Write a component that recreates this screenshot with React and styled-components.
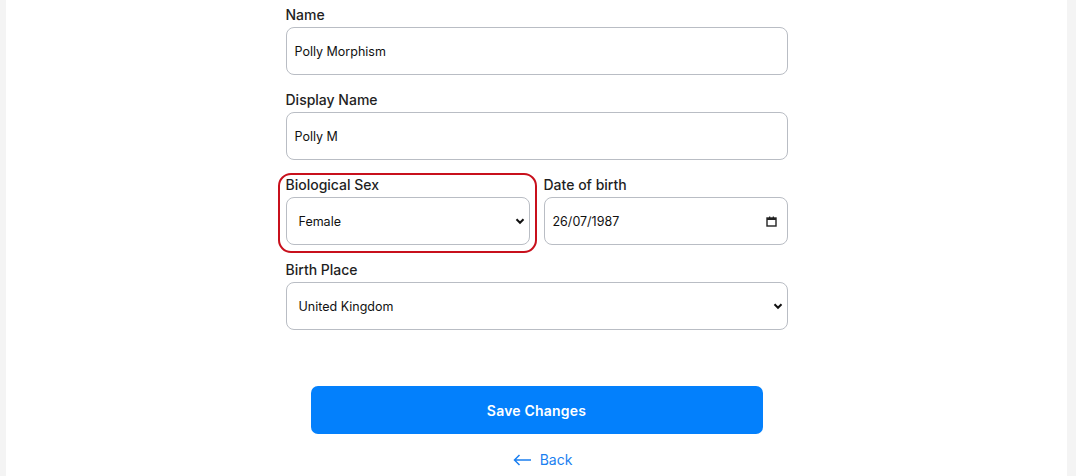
import React from "react";
import styled, { createGlobalStyle } from "styled-components";

const GlobalStyle = createGlobalStyle`
  html, body {
    margin: 0;
    padding: 0;
    background: #f4f4f4;
    font-family: Inter, "Open Sans", sans-serif;
  }
`;

export const Panel = styled.div`
  margin: 0 9px 0 6px;
  min-height: 476px;
  background: #ffffff;
  display: flex;
  justify-content: center;
`;

export const Form = styled.form`
  width: 502px;
  padding-top: 4px;
  display: flex;
  flex-direction: column;
  gap: 14px;
`;

export const Row = styled.div`
  display: grid;
  grid-template-columns: 1fr 1fr;
  gap: 14px;
`;

export const Field = styled.div`
  position: relative;
  display: flex;
  flex-direction: column;

  ${(p) =>
    p.highlighted &&
    `
    &::after {
      content: "";
      position: absolute;
      left: -8px;
      right: -7px;
      top: -1px;
      bottom: -8px;
      border: 2px solid #c8101c;
      border-radius: 13px;
      pointer-events: none;
    }
  `}
`;

export const Label = styled.label`
  font-size: 14px;
  font-weight: 500;
  line-height: 21px;
  color: #1f1f1f;
  margin-bottom: 2px;
`;

export const Box = styled.div`
  box-sizing: border-box;
  height: 48px;
  border: 1px solid #b9bdc4;
  border-radius: 8px;
  background: #fff;
  display: flex;
  align-items: center;
  justify-content: space-between;
  font-size: 12.5px;
  color: #111;
  padding-left: ${(p) => (p.select ? "12px" : "8px")};
  padding-right: ${(p) => (p.select ? "4px" : "10px")};
`;

export const Actions = styled.div`
  margin-top: 42px;
  display: flex;
  flex-direction: column;
  align-items: center;
  gap: 16px;
`;

export const SaveButton = styled.button`
  width: 452px;
  height: 48px;
  border: none;
  border-radius: 7px;
  background: #0380fc;
  color: #fff;
  font-family: inherit;
  font-size: 14px;
  font-weight: 600;
  letter-spacing: 0.2px;
  cursor: pointer;
`;

export const BackLink = styled.a`
  display: flex;
  align-items: center;
  gap: 8px;
  color: #1b7ff0;
  font-size: 14px;
  line-height: 20px;
  text-decoration: none;
  cursor: pointer;
  margin-left: 12px;
`;

const Chevron = () => (
  <svg width="10" height="10" viewBox="0 0 10 10">
    <path d="M1.5 3.2 L5 6.8 L8.5 3.2" fill="none" stroke="#111" strokeWidth="2" />
  </svg>
);

const Calendar = () => (
  <svg width="11" height="11" viewBox="0 0 11 11">
    <rect x="1" y="2" width="9" height="8" fill="none" stroke="#222" strokeWidth="1.4" />
    <rect x="1" y="2" width="9" height="2" fill="#222" />
    <rect x="3" y="0.5" width="1.3" height="2" fill="#222" />
    <rect x="6.7" y="0.5" width="1.3" height="2" fill="#222" />
  </svg>
);

const ArrowLeft = () => (
  <svg width="19" height="12" viewBox="0 0 19 12">
    <path d="M18 6 H1.5 M6.5 1 L1.5 6 L6.5 11" fill="none" stroke="#1b7ff0" strokeWidth="1.5" />
  </svg>
);

const App = () => {
  return (
    <>
      <GlobalStyle />
      <Panel>
        <Form onSubmit={(e) => e.preventDefault()}>
          <Field>
            <Label>Name</Label>
            <Box>Polly Morphism</Box>
          </Field>
          <Field>
            <Label>Display Name</Label>
            <Box>Polly M</Box>
          </Field>
          <Row>
            <Field highlighted>
              <Label>Biological Sex</Label>
              <Box select>
                <span>Female</span>
                <Chevron />
              </Box>
            </Field>
            <Field>
              <Label>Date of birth</Label>
              <Box>
                <span>26/07/1987</span>
                <Calendar />
              </Box>
            </Field>
          </Row>
          <Field>
            <Label>Birth Place</Label>
            <Box select>
              <span>United Kingdom</span>
              <Chevron />
            </Box>
          </Field>
          <Actions>
            <SaveButton type="submit">Save Changes</SaveButton>
            <BackLink>
              <ArrowLeft />
              Back
            </BackLink>
          </Actions>
        </Form>
      </Panel>
    </>
  );
};

export default App;
